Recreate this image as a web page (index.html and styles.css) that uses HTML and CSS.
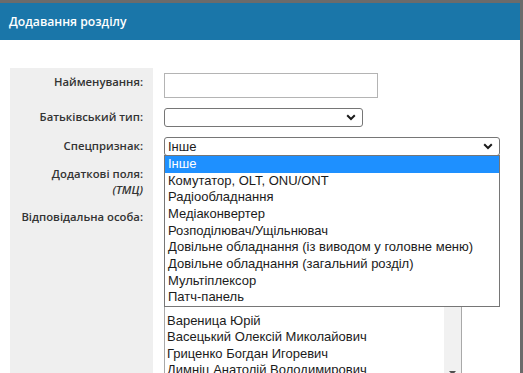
FILE: index.html
```html
<!DOCTYPE html>
<html lang="uk">
<head>
    <meta charset="UTF-8">
    <meta name="viewport" content="width=device-width, initial-scale=1.0">
    <title>Додавання розділу</title>
    <link rel="stylesheet" href="styles.css">
</head>
<body>
    <!-- Dialog window -->
    <div class="dialog">
        <div class="dialog-title">Додавання розділу</div>

        <div class="dialog-body">
            <div class="form">
                <!-- Name -->
                <div class="lbl">Найменування:</div>
                <div class="ctl">
                    <div class="text-input"></div>
                </div>

                <!-- Parent type -->
                <div class="lbl">Батьківський тип:</div>
                <div class="ctl">
                    <div class="select select-short">
                        <span class="select-value"></span>
                        <svg class="chevron" width="10" height="7" viewBox="0 0 10 7"><path d="M1.2 1.3 L5 5 L8.8 1.3" fill="none" stroke="#1b1b1b" stroke-width="2"/></svg>
                    </div>
                </div>

                <!-- Special flag -->
                <div class="lbl">Спецпризнак:</div>
                <div class="ctl">
                    <div class="select select-wide">
                        <span class="select-value">Інше</span>
                        <svg class="chevron" width="10" height="7" viewBox="0 0 10 7"><path d="M1.2 1.3 L5 5 L8.8 1.3" fill="none" stroke="#1b1b1b" stroke-width="2"/></svg>

                        <!-- Open dropdown list -->
                        <ul class="dropdown">
                            <li class="active">Інше</li>
                            <li>Комутатор, OLT, ONU/ONT</li>
                            <li>Радіообладнання</li>
                            <li>Медіаконвертер</li>
                            <li>Розподілювач/Ущільнювач</li>
                            <li>Довільне обладнання (із виводом у головне меню)</li>
                            <li>Довільне обладнання (загальний розділ)</li>
                            <li>Мультіплексор</li>
                            <li>Патч-панель</li>
                        </ul>
                    </div>
                </div>

                <!-- Extra fields -->
                <div class="lbl lbl-two">Додаткові поля:<br><i>(ТМЦ)</i></div>
                <div class="ctl">
                    <div class="extra"></div>
                </div>

                <!-- Responsible person -->
                <div class="lbl">Відповідальна особа:</div>
                <div class="ctl">
                    <div class="listbox">
                        <ul class="listbox-items">
                            <li>Андрієнко Сергій Петрович</li>
                            <li>Безверхий Олег Іванович</li>
                            <li>Білоус Максим Сергійович</li>
                            <li>Бойко Андрій Миколайович</li>
                            <li>Бондар Віктор Васильович</li>
                            <li class="peek">Бурлака Олександр Вадимович</li>
                            <li>Вареница Юрій</li>
                            <li>Васецький Олексій Миколайович</li>
                            <li>Гриценко Богдан Игоревич</li>
                            <li>Димніц Анатолій Володимирович</li>
                            <li>Дорошенко Ігор Петрович</li>
                        </ul>
                        <div class="scrollbar">
                            <svg class="scroll-arrow" width="7" height="4" viewBox="0 0 7 4"><path d="M0 0 H7 L3.5 4 Z" fill="#505050"/></svg>
                        </div>
                    </div>
                </div>
            </div>
        </div>
    </div>
</body>
</html>
```

FILE: styles.css
```css
/* Global Styles */
* {
    margin: 0;
    padding: 0;
    box-sizing: border-box;
}

body {
    font-family: "Open Sans", "Noto Sans", sans-serif;
    background-color: #6b6b6b;
    height: 100vh;
    overflow: hidden;
    display: flex;
    align-items: flex-start;
}

/* Dialog */
.dialog {
    width: 520px;
    height: 370px;
    margin-top: 3px;
    background-color: #fff;
    overflow: hidden;
}

.dialog-title {
    height: 37px;
    background-color: #1a76a9;
    color: #fff;
    font-size: 12.2px;
    font-weight: 600;
    line-height: 37px;
    padding-left: 9px;
}

.dialog-body {
    padding: 28px 0 0 10px;
}

/* Form grid */
.form {
    display: grid;
    grid-template-columns: 143px 1fr;
    column-gap: 11px;
}

.lbl {
    background-color: #efefef;
    color: #333;
    font-size: 11.3px;
    font-weight: 600;
    line-height: 18px;
    text-align: right;
    padding: 5px 10px 5px 0;
}

.lbl-two {
    line-height: 16px;
}

.lbl-two i {
    font-weight: 600;
}

.ctl {
    padding: 5px 0;
}

/* Inputs */
.text-input {
    width: 214px;
    height: 25px;
    border: 1px solid #b4b4b4;
    background-color: #fff;
}

.select {
    position: relative;
    height: 19px;
    border: 1px solid #767676;
    border-radius: 3px;
    background-color: #fff;
    display: flex;
    align-items: center;
    font-family: "Liberation Sans", Arial, sans-serif;
    font-size: 13px;
    color: #1b1b1b;
    padding: 0 6px 0 3px;
}

.select-short {
    width: 199px;
}

.select-wide {
    width: 336px;
}

.select-value {
    flex: 1;
}

.chevron {
    display: block;
}

/* Dropdown overlay */
.dropdown {
    position: absolute;
    left: -1px;
    top: 17px;
    width: 336px;
    list-style: none;
    border: 1px solid #767676;
    background-color: #fff;
    z-index: 5;
}

.dropdown li {
    height: 16.67px;
    line-height: 16.67px;
    padding-left: 3px;
    white-space: nowrap;
    color: #1b1b1b;
}

.dropdown li.active {
    background-color: #1e90ff;
    color: #fff;
}

.extra {
    height: 32px;
}

/* Multi-select list */
.listbox {
    width: 298px;
    height: 180px;
    border: 1px solid #a9a9a9;
    display: flex;
    overflow: hidden;
    font-family: "Liberation Sans", Arial, sans-serif;
    font-size: 13px;
    color: #1b1b1b;
}

.listbox-items {
    flex: 1;
    list-style: none;
    padding: 4px 0 0 2px;
}

.listbox-items li {
    height: 16.6px;
    line-height: 16.6px;
    white-space: nowrap;
}

/* row mostly hidden under the open dropdown */
.listbox-items li.peek {
    line-height: 8px;
}

.scrollbar {
    width: 17px;
    background-color: #f1f1f1;
    display: flex;
    flex-direction: column;
    justify-content: flex-start;
    align-items: center;
    padding-top: 162px;
}

.scroll-arrow {
    display: block;
}
```
